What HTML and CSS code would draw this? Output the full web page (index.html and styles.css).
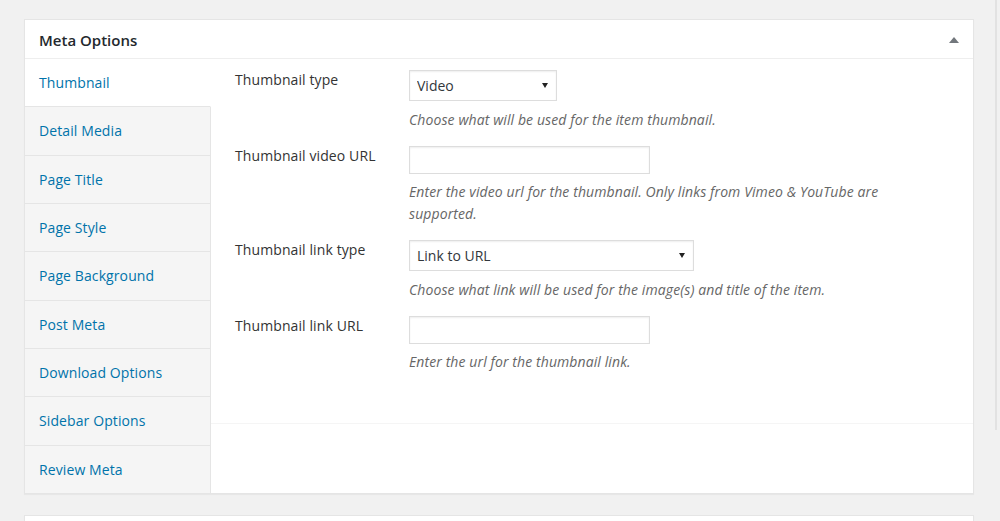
FILE: index.html
```html
<!DOCTYPE html>
<html lang="en">
<head>
<meta charset="utf-8">
<title>Meta Options</title>
<link rel="stylesheet" href="styles.css">
</head>
<body>
<div class="page">
  <div class="postbox">
    <div class="postbox-header">
      <h2>Meta Options</h2>
      <span class="toggle" aria-hidden="true">
        <svg width="10" height="6" viewBox="0 0 10 6"><path d="M0 6 L5 0 L10 6 Z" fill="#72777c"/></svg>
      </span>
    </div>
    <div class="postbox-body">
      <ul class="tabs">
        <li class="tab active">Thumbnail</li>
        <li class="tab">Detail Media</li>
        <li class="tab">Page Title</li>
        <li class="tab">Page Style</li>
        <li class="tab">Page Background</li>
        <li class="tab">Post Meta</li>
        <li class="tab">Download Options</li>
        <li class="tab">Sidebar Options</li>
        <li class="tab">Review Meta</li>
      </ul>
      <div class="content">
        <div class="panel">
          <div class="row">
            <label class="label">Thumbnail type</label>
            <div class="field">
              <span class="select-wrap">
                <select class="select select-short"><option>Video</option></select>
                <span class="arrow"></span>
              </span>
              <p class="desc">Choose what will be used for the item thumbnail.</p>
            </div>
          </div>
          <div class="row">
            <label class="label">Thumbnail video URL</label>
            <div class="field">
              <input class="input" type="text">
              <p class="desc desc-input">Enter the video url for the thumbnail. Only links from Vimeo &amp; YouTube are supported.</p>
            </div>
          </div>
          <div class="row">
            <label class="label">Thumbnail link type</label>
            <div class="field">
              <span class="select-wrap">
                <select class="select select-long"><option>Link to URL</option></select>
                <span class="arrow"></span>
              </span>
              <p class="desc">Choose what link will be used for the image(s) and title of the item.</p>
            </div>
          </div>
          <div class="row">
            <label class="label">Thumbnail link URL</label>
            <div class="field">
              <input class="input" type="text">
              <p class="desc desc-input">Enter the url for the thumbnail link.</p>
            </div>
          </div>
        </div>
      </div>
    </div>
  </div>
  <div class="postbox next"></div>
</div>
<div class="scroll-line"></div>
</body>
</html>
```

FILE: styles.css
```css
html, body {
  margin: 0;
  overflow: hidden;
  height: 521px;
}
body {
  background: #f1f1f1;
  font-family: "Open Sans", "Liberation Sans", sans-serif;
  font-size: 14px;
  color: #444;
}
.page {
  padding: 19px 0 0 24px;
}
.postbox {
  width: 950px;
  box-sizing: border-box;
  background: #fff;
  border: 1px solid #e5e5e5;
  box-shadow: 0 1px 1px rgba(0, 0, 0, 0.04);
}
.postbox-header {
  height: 38px;
  border-bottom: 1px solid #eee;
  display: flex;
  align-items: center;
  justify-content: space-between;
  padding: 0 14px;
}
.postbox-header h2 {
  margin: 2px 0 0;
  font-size: 15px;
  font-weight: 600;
  line-height: 1.4;
  color: #23282d;
}
.toggle {
  display: flex;
  margin-top: 1px;
}
.postbox-body {
  display: flex;
  height: 434px;
}
.tabs {
  list-style: none;
  margin: 0;
  padding: 0;
  width: 186px;
  display: flex;
  flex-direction: column;
  background: #f5f5f5;
}
.tab {
  flex: 1;
  display: flex;
  align-items: center;
  padding-left: 14px;
  color: #0073aa;
  letter-spacing: 0.1px;
  border-bottom: 1px solid #e5e5e5;
  border-right: 1px solid #e5e5e5;
}
.tab:last-child {
  border-bottom: 0;
}
.tab.active {
  background: #fff;
  border-right-color: #fff;
}
.content {
  flex: 1;
}
.panel {
  height: 365px;
  box-sizing: border-box;
  border-bottom: 1px solid #f5f5f5;
  padding: 11px 24px 0 24px;
}
.row {
  display: flex;
  margin-bottom: 15px;
}
.label {
  width: 174px;
  flex: none;
  line-height: 20px;
  color: #333;
  letter-spacing: 0.1px;
}
.field {
  width: 500px;
  display: flex;
  flex-direction: column;
  align-items: flex-start;
}
.select-wrap {
  position: relative;
  display: inline-block;
}
.select {
  -webkit-appearance: none;
  appearance: none;
  height: 31px;
  margin: 0;
  padding: 0 7px;
  border: 1px solid #ddd;
  border-radius: 0;
  background: #fff;
  font-family: inherit;
  font-size: 14px;
  color: #32373c;
  box-shadow: inset 0 1px 2px rgba(0, 0, 0, 0.07);
  display: block;
}
.select-short {
  width: 148px;
}
.select-long {
  width: 285px;
}
.arrow {
  position: absolute;
  right: 9px;
  top: 13px;
  width: 0;
  height: 0;
  border-left: 3px solid transparent;
  border-right: 3px solid transparent;
  border-top: 5px solid #222;
}
.input {
  width: 241px;
  height: 28px;
  box-sizing: border-box;
  margin: 0;
  border: 1px solid #ddd;
  border-radius: 0;
  background: #fff;
  box-shadow: inset 0 1px 2px rgba(0, 0, 0, 0.07);
  display: block;
}
.desc {
  margin: 8px 0 0;
  font-style: italic;
  font-size: 14px;
  letter-spacing: 0.1px;
  line-height: 22px;
  color: #666;
}
.desc-input {
  margin-top: 7px;
}
.postbox.next {
  margin-top: 21px;
  height: 40px;
}
.scroll-line {
  position: fixed;
  left: 995px;
  top: 0;
  width: 2px;
  height: 430px;
  background: #e2e2e2;
}
```
